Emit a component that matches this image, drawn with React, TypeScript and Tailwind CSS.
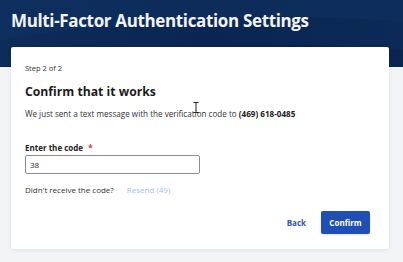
import { useState } from "react";

export default function App() {
  const [code, setCode] = useState("38");

  return (
    <div
      className="relative h-[262px] w-[403px] overflow-hidden bg-[#f3f4f6]"
      style={{ fontFamily: '"Open Sans", "Noto Sans", sans-serif' }}
    >
      {/* header band */}
      <div className="absolute inset-x-0 top-0 h-[67px] bg-gradient-to-r from-[#0d2c5a] via-[#0a2650] to-[#0b2a57]">
        <svg className="absolute inset-0 h-full w-full" viewBox="0 0 403 67" preserveAspectRatio="none">
          <path d="M0 40 C120 20 260 10 403 22 L403 0 L0 0 Z" fill="#0f3163" opacity="0.5" />
          <path d="M0 67 C140 45 280 40 403 50 L403 67 Z" fill="#08214a" opacity="0.6" />
        </svg>
      </div>

      <div className="relative px-[11px]">
        <h1 className="pt-[10px] text-[17px] font-bold leading-[22px] tracking-[-0.35px] text-[#f2f4f8]">
          Multi-Factor Authentication Settings
        </h1>

        {/* card */}
        <div className="mt-[15px] h-[202px] w-[378px] rounded-[2px] bg-white px-[14px] pt-[16px] shadow-[0_1px_4px_rgba(0,0,0,0.08)]">
          <p className="text-[7.5px] leading-[10px] text-[#333]">Step 2 of 2</p>
          <h2 className="mt-[11px] text-[12.2px] font-bold leading-[16px] text-[#1c1c1c]">Confirm that it works</h2>
          <p className="mt-[8px] text-[8.1px] leading-[11px] text-[#333]">
            We just sent a text message with the verification code to{" "}
            <span className="font-bold text-[#222]">(469) 618-0485</span>
          </p>

          <label htmlFor="code" className="mt-[24px] block text-[8px] font-bold leading-[10px] text-[#222]">
            Enter the code <span className="ml-[3px] text-[#d9363e]">*</span>
          </label>
          <input
            id="code"
            value={code}
            onChange={(e) => setCode(e.target.value)}
            className="mt-[2px] block h-[19px] w-[175px] rounded-[2px] border border-[#8a8d92] px-[4px] text-[8px] text-[#222] outline-none"
          />

          <div className="mt-[10px] flex items-center gap-[13px] text-[8px] leading-[11px]">
            <span className="text-[#333]">Didn&apos;t receive the code?</span>
            <span className="text-[#a9bde6]">Resend (49)</span>
          </div>

          <div className="mt-[16px] flex items-center justify-end gap-[15px] pr-[5px]">
            <button className="text-[8px] font-bold text-[#2f56a8]">Back</button>
            <button className="h-[23px] w-[49px] rounded-[2px] bg-[#1f4eb4] text-[8px] font-bold text-white shadow-sm">
              Confirm
            </button>
          </div>
        </div>
      </div>

      {/* mouse I-beam cursor */}
      <svg className="absolute left-[193px] top-[102px]" width="6" height="11" viewBox="0 0 6 11">
        <path d="M0.5 0.5 H5.5 M3 0.5 V10.5 M0.5 10.5 H5.5" stroke="#222" strokeWidth="1" fill="none" />
      </svg>
    </div>
  );
}
